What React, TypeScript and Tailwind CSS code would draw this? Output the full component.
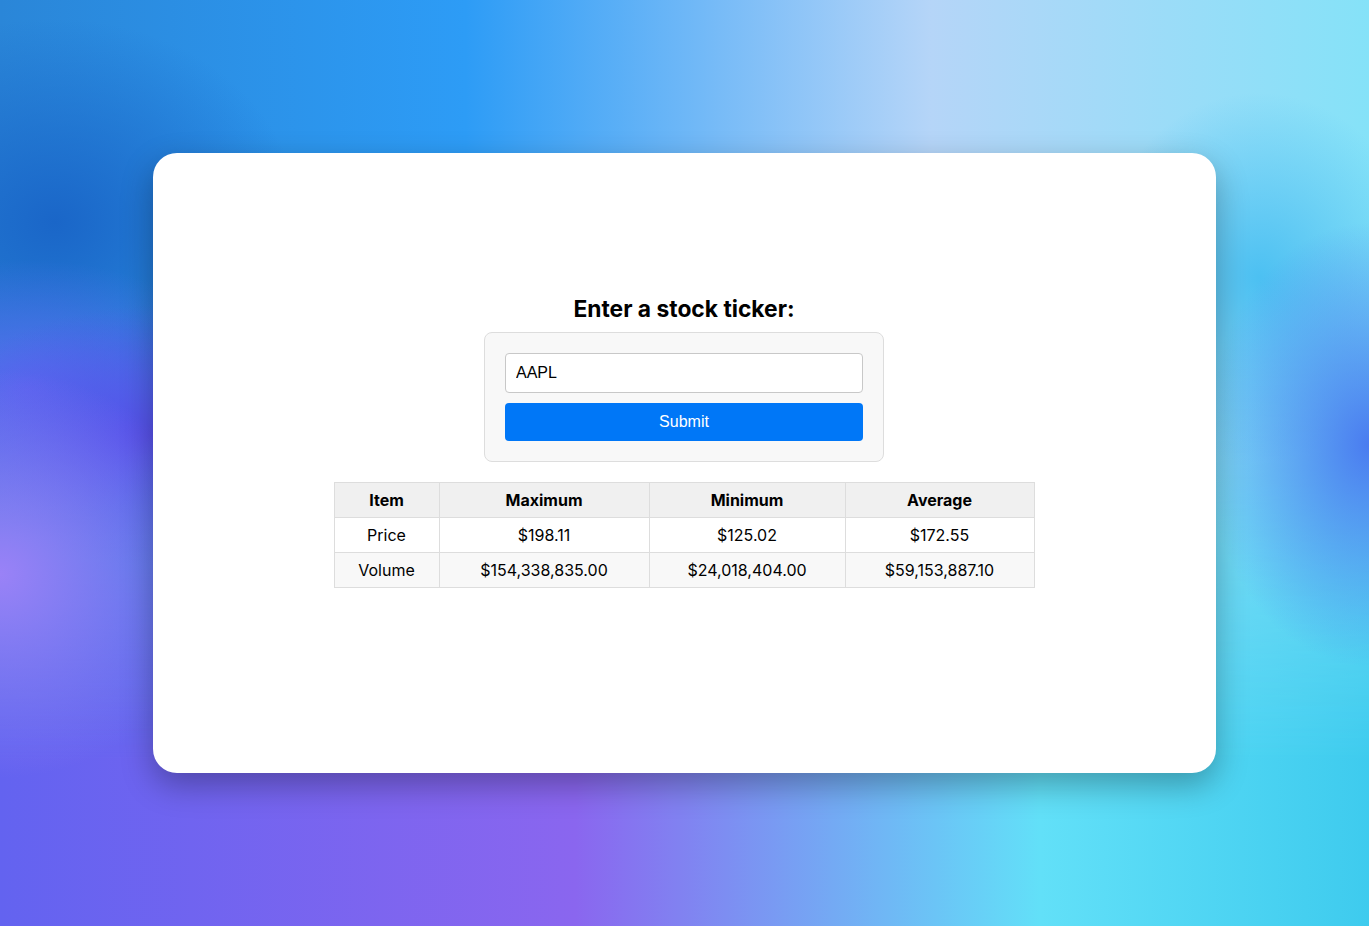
import React from 'react'

const rows = [
  { item: 'Price', max: '$198.11', min: '$125.02', avg: '$172.55' },
  { item: 'Volume', max: '$154,338,835.00', min: '$24,018,404.00', avg: '$59,153,887.10' },
]

export default function App() {
  return (
    <div className="relative w-[1369px] h-[926px] overflow-hidden">
      {/* gradient mesh background */}
      <div className="absolute inset-0 bg-[linear-gradient(to_right,#2a86d8_0%,#2d9cf6_34%,#b5d5f8_68%,#85e2f8_100%)]" />
      <div className="absolute inset-0 bg-[linear-gradient(to_right,#6363f0_0%,#8a66ef_42%,#62e0f8_76%,#3ecbee_100%)] [mask-image:linear-gradient(to_bottom,transparent_35%,black_82%)]" />
      <div className="absolute inset-0 bg-[radial-gradient(ellipse_12%_24%_at_100%_48%,#4a7cf0_0%,transparent_100%),radial-gradient(ellipse_16%_22%_at_0%_62%,#9a82f7_0%,transparent_100%),radial-gradient(ellipse_16%_14%_at_11%_47%,#5650ea_0%,transparent_100%),radial-gradient(ellipse_16%_14%_at_2%_42%,#5a6cf0_0%,transparent_100%),radial-gradient(ellipse_18%_22%_at_4%_24%,#1a66c8_0%,transparent_100%),radial-gradient(ellipse_12%_20%_at_92%_30%,#4cc0f2_0%,transparent_100%)]" />

      <div className="relative flex justify-center pt-[153px]">
        <div className="w-[1063px] h-[620px] bg-white rounded-[24px] shadow-[0_12px_32px_rgba(0,0,0,0.3)] flex flex-col items-center pt-[143px] pr-px font-['Inter',sans-serif] text-black">
          <h2 className="text-[22.8px] leading-[26px] font-bold mb-[10px]">Enter a stock ticker:</h2>

          <form
            className="w-[400px] p-5 bg-[#f8f8f8] border border-[#dddddd] rounded-lg flex flex-col gap-[10px]"
            onSubmit={(e) => e.preventDefault()}
          >
            <input
              defaultValue="AAPL"
              className="h-10 w-full px-[10px] border border-[#c8c8c8] rounded bg-white text-[16px] font-['Liberation_Sans',Arial,sans-serif] text-black outline-none"
            />
            <button
              type="submit"
              className="h-[38px] w-full rounded bg-[#0077f7] text-white text-[16px] font-['Liberation_Sans',Arial,sans-serif]"
            >
              Submit
            </button>
          </form>

          <table className="mt-5 w-[700px] table-fixed border-collapse text-[16px] text-center">
            <colgroup>
              <col className="w-[105px]" />
              <col className="w-[210px]" />
              <col className="w-[196px]" />
              <col className="w-[189px]" />
            </colgroup>
            <thead>
              <tr className="bg-[#f0f0f0] h-[35px]">
                <th className="border border-[#dddddd] font-bold">Item</th>
                <th className="border border-[#dddddd] font-bold">Maximum</th>
                <th className="border border-[#dddddd] font-bold">Minimum</th>
                <th className="border border-[#dddddd] font-bold">Average</th>
              </tr>
            </thead>
            <tbody>
              {rows.map((r, i) => (
                <tr key={r.item} className={i % 2 === 1 ? 'bg-[#f8f8f8] h-[35px]' : 'bg-white h-[35px]'}>
                  <td className="border border-[#dddddd]">{r.item}</td>
                  <td className="border border-[#dddddd]">{r.max}</td>
                  <td className="border border-[#dddddd]">{r.min}</td>
                  <td className="border border-[#dddddd]">{r.avg}</td>
                </tr>
              ))}
            </tbody>
          </table>
        </div>
      </div>
    </div>
  )
}
